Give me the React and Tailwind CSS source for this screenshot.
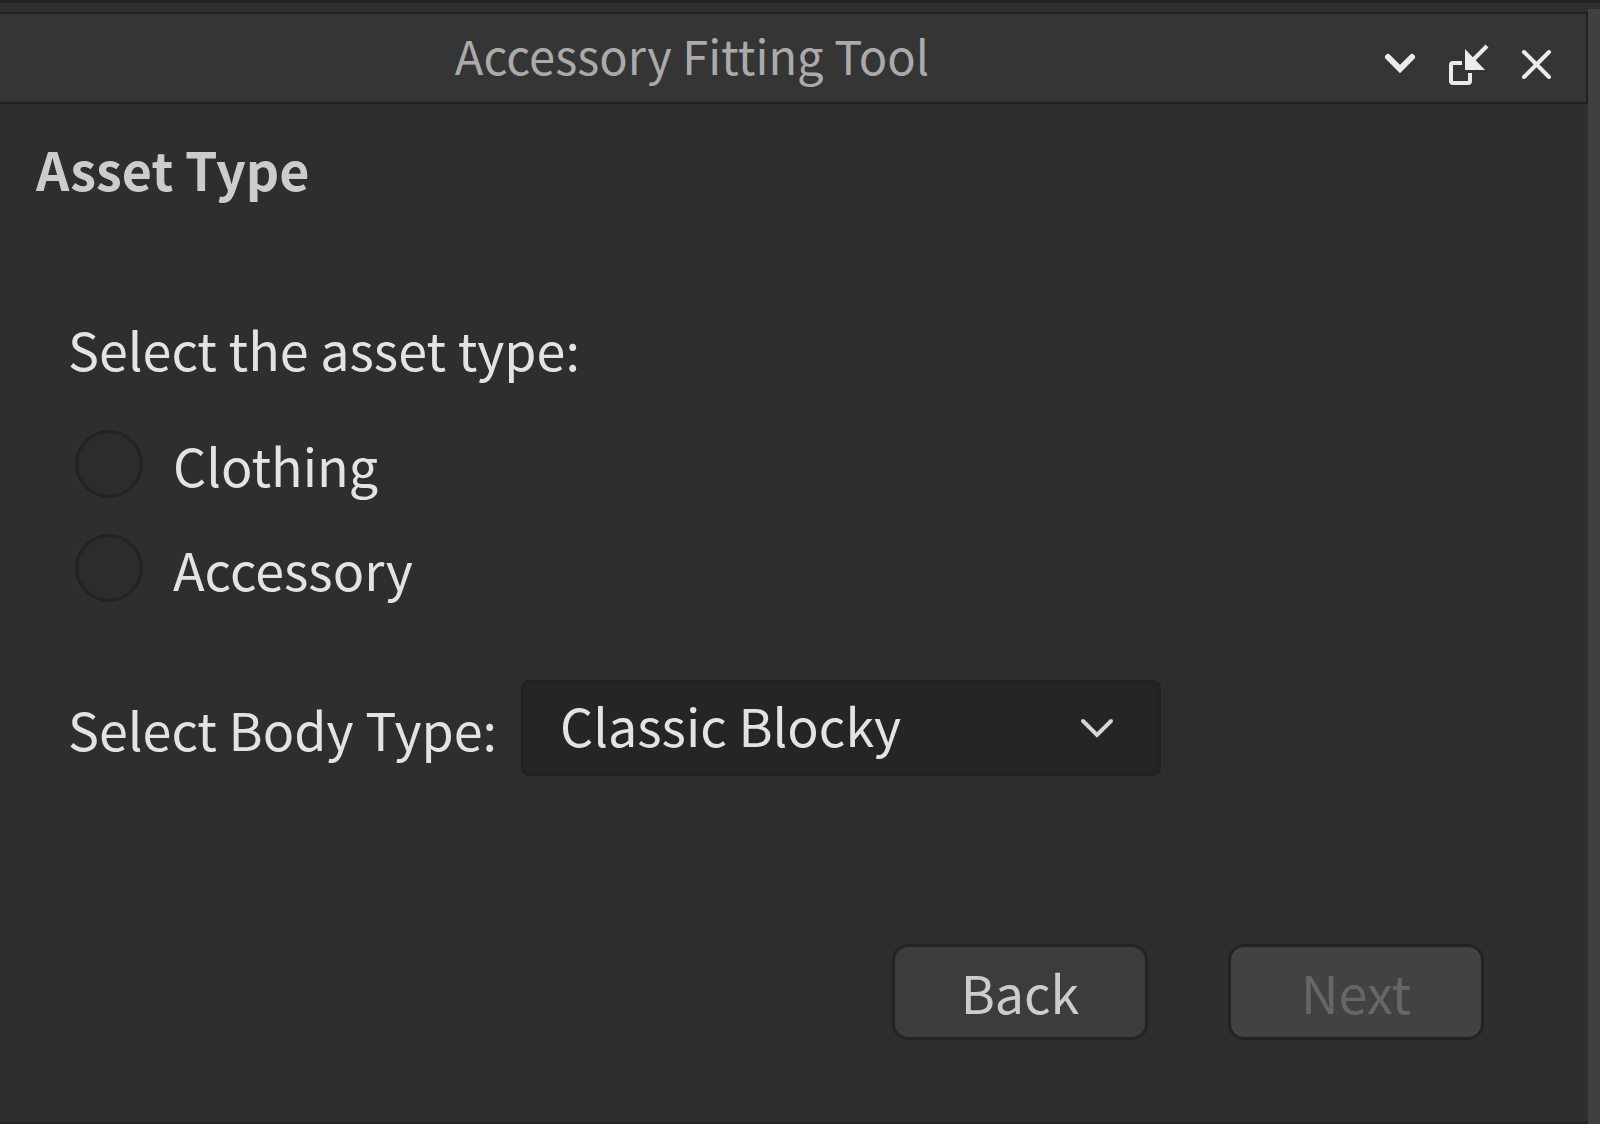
import React, { useState } from "react";

const ASSET_TYPES = ["Clothing", "Accessory"];
const BODY_TYPES = ["Classic Blocky", "Classic Male", "Classic Female", "Roblox Boy", "Roblox Girl"];

const TitleBar = () => (
    <header className="flex h-[92px] items-center border-y-2 border-r-2 border-[#222222] bg-[#353535]">
        <h1 className="flex-1 pb-1.5 pl-1.5 text-center text-[47px] leading-[64px] text-[#aaaaaa]">Accessory Fitting Tool</h1>
        <div className="flex items-center gap-6 pt-3.5 pr-7 text-[#ebebeb]">
            <button type="button" aria-label="Collapse" className="flex size-11 items-center justify-center">
                <svg className="size-11" viewBox="0 0 44 44" fill="none" stroke="currentColor" strokeWidth="6" strokeLinecap="round">
                    <path d="M10 14 L22 26 L34 14" />
                </svg>
            </button>
            <button type="button" aria-label="Dock" className="flex size-11 items-center justify-center">
                <svg className="size-11" viewBox="0 0 44 44" fill="none" stroke="currentColor" strokeWidth="4">
                    <path d="M16 20 H7 Q5 20 5 22 V38 Q5 40 7 40 H22 Q24 40 24 38 V30" />
                    <path d="M41 3 L26 18" />
                    <path d="M19 6 V27 H39 Z" fill="currentColor" stroke="none" />
                </svg>
            </button>
            <button type="button" aria-label="Close" className="flex size-11 items-center justify-center">
                <svg className="size-11" viewBox="0 0 44 44" fill="none" stroke="currentColor" strokeWidth="4" strokeLinecap="round">
                    <path d="M10 9 L35 34 M35 9 L10 34" />
                </svg>
            </button>
        </div>
    </header>
);

export default function App() {
    const [assetType, setAssetType] = useState("");
    const [bodyType, setBodyType] = useState(BODY_TYPES[0]);

    return (
        <div className="flex min-h-screen flex-col border-t-[3px] border-[#222222] bg-[#2e2e2e] font-['Noto_Sans_CJK_SC','Noto_Sans',sans-serif] text-[52px] leading-[72px] text-[#e3e3e3]">
            <div className="h-1.5" />
            <div className="flex flex-1">
                <main className="flex flex-1 flex-col border-b-2 border-[#262626]">
                    <div className="h-[3px]" />
                    <TitleBar />

                    <form className="flex flex-1 flex-col" onSubmit={(e) => e.preventDefault()}>
                        <h2 className="pt-[29px] pl-9 font-bold text-[#cccccc]">Asset Type</h2>

                        <fieldset className="pt-[108px] pl-[68px]">
                            <legend className="contents">Select the asset type:</legend>
                            <div className="flex flex-col gap-8 pt-11">
                                {ASSET_TYPES.map((type) => (
                                    <label key={type} className="flex items-center gap-[30px] pl-[7px]">
                                        <input
                                            type="radio"
                                            name="assetType"
                                            value={type}
                                            checked={assetType === type}
                                            onChange={() => setAssetType(type)}
                                            className="mb-0.5 size-[68px] appearance-none rounded-full border-[3px] border-[#232323] bg-[#2c2c2c] checked:bg-[#e3e3e3]"
                                        />
                                        {type}
                                    </label>
                                ))}
                            </div>
                        </fieldset>

                        <div className="flex items-center gap-6 pt-[75px] pl-[68px]">
                            <label htmlFor="bodyType" className="pt-0.5">Select Body Type:</label>
                            <div className="grid w-[640px] items-center">
                                <select
                                    id="bodyType"
                                    value={bodyType}
                                    onChange={(e) => setBodyType(e.target.value)}
                                    className="col-start-1 row-start-1 h-24 appearance-none rounded-lg border-[3px] border-[#222222] bg-[#252525] pr-24 pb-1.5 pl-9"
                                >
                                    {BODY_TYPES.map((type) => <option key={type}>{type}</option>)}
                                </select>
                                <svg className="pointer-events-none col-start-1 row-start-1 mr-11 size-10 justify-self-end" viewBox="0 0 40 40" fill="none" stroke="#d6d6d6" strokeWidth="4" strokeLinecap="round">
                                    <path d="M6 13 L20 27 L34 13" />
                                </svg>
                            </div>
                        </div>

                        <div className="mt-auto flex justify-end gap-20 pr-[104px] pb-[82px] pt-10">
                            <button type="button" className="h-24 w-64 rounded-2xl border-[3px] border-[#232323] bg-[#3c3c3c] text-[#cccccc]">Back</button>
                            <button type="submit" disabled={!assetType} className="h-24 w-64 rounded-2xl border-[3px] border-[#232323] bg-[#3c3c3c] text-[#cccccc] disabled:bg-[#424242] disabled:text-[#666666]">Next</button>
                        </div>
                    </form>
                </main>
                <div className="w-3 bg-[#404040]" />
            </div>
        </div>
    );
}
